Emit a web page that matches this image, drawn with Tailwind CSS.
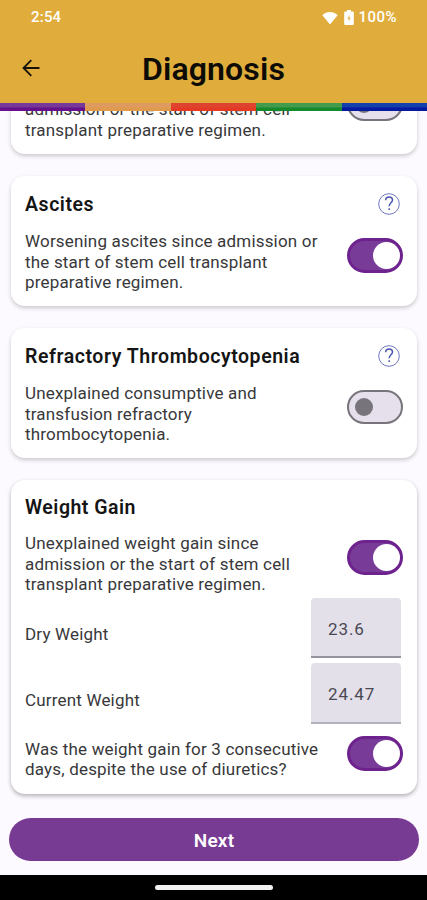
<!DOCTYPE html>
<html lang="en">
<head>
<meta charset="utf-8">
<title>Diagnosis</title>
<script src="https://cdn.jsdelivr.net/npm/@tailwindcss/browser@4"></script>
</head>
<body class="w-[427px] h-[900px] overflow-hidden bg-[#fdfaff] font-['Roboto',sans-serif] text-[#38383a]">
<div class="flex flex-col h-[900px]">
  <header class="relative z-10 shrink-0 h-[111px] flex flex-col bg-[#e0ad3c]">
    <div class="h-[35px] flex items-center justify-between pl-[31px] pr-[30px] text-white text-[15px] leading-none font-medium">
      <span class="tracking-[0.200px]">2:54</span>
      <div class="flex items-center">
        <svg class="w-[16px] h-[14px] mr-[6px]" viewBox="0 0 16 14" fill="#fff"><path d="M8 13.500 .4 4.200C4.500-.2 11.500-.2 15.600 4.200Z"/></svg>
        <svg class="w-[10px] h-[15px] mr-[4px]" viewBox="0 0 10 15"><path fill="#fff" d="M3 0h4v1.500h1.500c.8 0 1.300.5 1.300 1.300v10.900c0 .8-.5 1.300-1.300 1.300h-7C.7 15 .2 14.500.2 13.700V2.800C.2 2 .7 1.500 1.500 1.500H3Z"/><path fill="#e6bb5c" d="M5.400 5 3.200 8.800h1.500v2.700L6.900 7.700H5.400Z"/></svg>
        <span class="tracking-[0.500px]">100%</span>
      </div>
    </div>
    <div class="h-[68px] grid grid-cols-[62px_1fr_62px] items-center">
      <svg class="w-[18px] h-[18px] ml-[22px] -mt-[2px]" viewBox="0 0 18 18" fill="none" stroke="#17130a" stroke-width="1.800"><path d="M17.500 9H2M9.300 1.200 1.500 9l7.800 7.800"/></svg>
      <h1 class="text-center text-[32px] leading-none font-semibold tracking-[0.150px] text-[#0d0b05]">Diagnosis</h1>
    </div>
    <div class="h-[8px] grid grid-cols-5">
      <i class="bg-linear-to-b from-[#76399a] from-50% to-[#66108c] to-60%"></i>
      <i class="bg-linear-to-b from-[#de9a60] from-50% to-[#e09a4c] to-60%"></i>
      <i class="bg-linear-to-b from-[#de4330] from-50% to-[#e43a24] to-60%"></i>
      <i class="bg-linear-to-b from-[#439b4d] from-50% to-[#148a2c] to-60%"></i>
      <i class="bg-linear-to-b from-[#1440ac] from-50% to-[#0418a0] to-60%"></i>
    </div>
  </header>

  <main class="flex-1 flex flex-col gap-[22px] pl-[11px] pr-[10px] -mt-[55px] text-[17px] leading-[20.500px] tracking-[0.180px]">
    <section class="h-[98px] shrink-0 rounded-[14px] bg-white shadow-[0_2px_4px_rgba(0,0,0,0.2)] flex justify-between items-end pl-[14px] pr-[14px] pb-[14px]">
      <p>admission or the start of stem cell<br>transplant preparative regimen.</p>
      <span class="w-[56px] h-[34px] mb-[19px] rounded-full border-2 border-[#77747c] bg-[#e5e0eb] flex items-center pl-[6px]"><i class="size-[18px] rounded-full bg-[#77747c]"></i></span>
    </section>

    <section class="h-[130px] shrink-0 rounded-[14px] bg-white shadow-[0_2px_4px_rgba(0,0,0,0.2)] px-[14px] pt-[16px]">
      <div class="h-[24px] flex items-center justify-between">
        <h2 class="pt-[2px] text-[19.500px] font-semibold tracking-[0.550px] text-[#151515]">Ascites</h2>
        <svg class="size-[22px] mr-[3px] -mt-[1px]" viewBox="0 0 22 22" fill="none" stroke="#4b57ae"><circle cx="11" cy="11" r="10.300" stroke-width=".8"/><path stroke-width="1.500" d="M7.600 7.200C7.900 2.800 14.500 3 14.500 7c0 2.700-3.300 3-3.300 6.200M11.200 15.300v1.700"/></svg>
      </div>
      <div class="mt-[15px] flex justify-between">
        <p>Worsening ascites since admission or<br>the start of stem cell transplant<br>preparative regimen.</p>
        <span class="w-[56px] h-[35px] mt-[7px] shrink-0 rounded-full border-[3px] border-[#6e228e] bg-[#783b98] flex items-center justify-end"><i class="size-[27px] rounded-full bg-white"></i></span>
      </div>
    </section>

    <section class="h-[130px] shrink-0 rounded-[14px] bg-white shadow-[0_2px_4px_rgba(0,0,0,0.2)] px-[14px] pt-[16px]">
      <div class="h-[24px] flex items-center justify-between">
        <h2 class="pt-[2px] text-[19.500px] font-semibold tracking-[0.550px] text-[#151515]">Refractory Thrombocytopenia</h2>
        <svg class="size-[22px] mr-[3px] -mt-[1px]" viewBox="0 0 22 22" fill="none" stroke="#4b57ae"><circle cx="11" cy="11" r="10.300" stroke-width=".8"/><path stroke-width="1.500" d="M7.600 7.200C7.900 2.800 14.500 3 14.500 7c0 2.700-3.300 3-3.300 6.200M11.200 15.300v1.700"/></svg>
      </div>
      <div class="mt-[15px] flex justify-between">
        <p>Unexplained consumptive and<br>transfusion refractory<br>thrombocytopenia.</p>
        <span class="w-[56px] h-[34px] mt-[7px] shrink-0 rounded-full border-2 border-[#77747c] bg-[#e5e0eb] flex items-center pl-[6px]"><i class="size-[18px] rounded-full bg-[#77747c]"></i></span>
      </div>
    </section>

    <section class="h-[314px] shrink-0 rounded-[14px] bg-white shadow-[0_2px_4px_rgba(0,0,0,0.3)] px-[14px] pt-[15px]">
      <h2 class="h-[24px] leading-[26px] text-[19.500px] font-semibold tracking-[0.500px] text-[#151515]">Weight Gain</h2>
      <div class="mt-[14px] flex justify-between">
        <p>Unexplained weight gain since<br>admission or the start of stem cell<br>transplant preparative regimen.</p>
        <span class="w-[56px] h-[35px] mt-[7px] shrink-0 rounded-full border-[3px] border-[#6e228e] bg-[#783b98] flex items-center justify-end"><i class="size-[27px] rounded-full bg-white"></i></span>
      </div>
      <div class="mt-[3px] h-[61px] flex justify-between pr-[2px]">
        <span class="pt-[26px]">Dry Weight</span>
        <span class="w-[90px] h-[60px] rounded-t-[4px] border-b-2 border-[#96939f] bg-[#e4e0ea] pl-[17px] pt-[21px] tracking-[0.900px] text-[#4a4852]">23.6</span>
      </div>
      <div class="mt-[4px] h-[61px] flex justify-between pr-[2px]">
        <span class="pt-[27px]">Current Weight</span>
        <span class="w-[90px] h-[61px] rounded-t-[4px] border-b-2 border-[#b3b1bd] bg-[#e4e0ea] pl-[17px] pt-[21px] tracking-[0.900px] text-[#4a4852]">24.47</span>
      </div>
      <div class="mt-[12px] flex justify-between">
        <p class="pt-[3px]">Was the weight gain for 3 consecutive<br>days, despite the use of diuretics?</p>
        <span class="w-[56px] h-[35px] shrink-0 rounded-full border-[3px] border-[#6e228e] bg-[#783b98] flex items-center justify-end"><i class="size-[27px] rounded-full bg-white"></i></span>
      </div>
    </section>
  </main>

  <div class="h-[57px] shrink-0 px-[9px]">
    <button class="block w-[410px] h-[43px] pt-[3px] rounded-full bg-[#783b94] text-white text-[19px] font-semibold tracking-[0.200px]">Next</button>
  </div>
  <footer class="h-[25px] shrink-0 bg-black flex justify-center pt-[10px]"><i class="w-[118px] h-[5px] rounded-full bg-[#f1f1f1]"></i></footer>
</div>
</body>
</html>
